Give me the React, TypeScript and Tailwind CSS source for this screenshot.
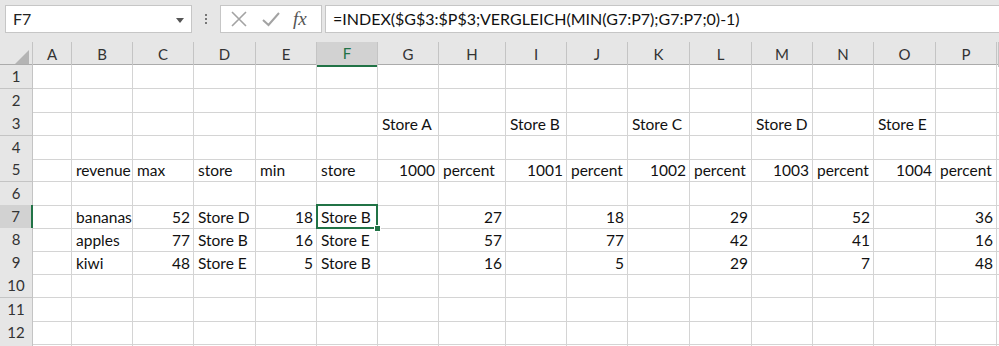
import React from "react";

const COLS = ["A", "B", "C", "D", "E", "F", "G", "H", "I", "J", "K", "L", "M", "N", "O", "P", ""];
const GRID = "grid grid-cols-[33px_39px_61px_61px_62px_61px_61px_61px_67px_61px_61px_62px_62px_61px_61px_62px_61px_1fr]";
const HEIGHTS = ["h-[24px]", "h-[23px]", "h-[24px]", "h-[22px]", "h-[24px]", "h-[23px]", "h-[23px]", "h-[23px]", "h-[23px]", "h-[24px]", "h-[23px]", "h-[23px]", "h-[23px]"];

type Cell = { v: string; r?: boolean };
type Row = Record<string, Cell>;

const t = (v: string): Cell => ({ v });
const n = (v: string): Cell => ({ v, r: true });

const DATA: Record<number, Row> = {
  3: { G: t("Store A"), I: t("Store B"), K: t("Store C"), M: t("Store D"), O: t("Store E") },
  5: {
    B: t("revenue"), C: t("max"), D: t("store"), E: t("min"), F: t("store"),
    G: n("1000"), H: t("percent"), I: n("1001"), J: t("percent"), K: n("1002"), L: t("percent"),
    M: n("1003"), N: t("percent"), O: n("1004"), P: t("percent"),
  },
  7: { B: t("bananas"), C: n("52"), D: t("Store D"), E: n("18"), F: t("Store B"), H: n("27"), J: n("18"), L: n("29"), N: n("52"), P: n("36") },
  8: { B: t("apples"), C: n("77"), D: t("Store B"), E: n("16"), F: t("Store E"), H: n("57"), J: n("77"), L: n("42"), N: n("41"), P: n("16") },
  9: { B: t("kiwi"), C: n("48"), D: t("Store E"), E: n("5"), F: t("Store B"), H: n("16"), J: n("5"), L: n("29"), N: n("7"), P: n("48") },
};

function FormulaBar() {
  return (
    <div className="flex h-[42px] items-start bg-[#e6e6e6] pt-[5px] font-['Lato',sans-serif]">
      <div className="ml-[5px] flex h-[28px] w-[187px] items-center justify-between border border-[#c6c6c6] bg-white pl-[7px] pr-[7px] text-[16px] text-[#222]">
        <span>F7</span>
        <svg width="8" height="5" viewBox="0 0 8 5" className="mt-[2px]">
          <path d="M0 0h8L4 5z" fill="#555" />
        </svg>
      </div>
      <div className="flex h-[28px] w-[28px] flex-col items-center justify-center gap-[2px]">
        <span className="h-[2px] w-[2px] bg-[#777]" />
        <span className="h-[2px] w-[2px] bg-[#777]" />
        <span className="h-[2px] w-[2px] bg-[#777]" />
      </div>
      <div className="flex h-[28px] w-[102px] items-center border border-[#c6c6c6] bg-white">
        <svg width="20" height="20" viewBox="0 0 20 20" className="ml-[8px]">
          <path d="M3 3L17 17M17 3L3 17" stroke="#a3a3a3" strokeWidth="1.6" fill="none" />
        </svg>
        <svg width="20" height="20" viewBox="0 0 20 20" className="ml-[12px]">
          <path d="M2 11L7.5 16L18 4" stroke="#a3a3a3" strokeWidth="2" fill="none" />
        </svg>
        <span className="ml-[12px] font-['Liberation_Serif',serif] text-[19px] italic text-[#555]">fx</span>
      </div>
      <div className="ml-[3px] flex h-[28px] flex-1 items-center border border-r-0 border-[#c6c6c6] bg-white pl-[7px] text-[16px] text-[#111]">
        =INDEX($G$3:$P$3;VERGLEICH(MIN(G7:P7);G7:P7;0)-1)
      </div>
    </div>
  );
}

function HeaderRow() {
  return (
    <div className={`${GRID} h-[23px] border-b border-[#ababab] bg-[#e6e6e6] font-['Lato',sans-serif] text-[15px] text-[#333]`}>
      <div className="relative border-r border-[#c4c4c4]">
        <svg width="14" height="14" viewBox="0 0 14 14" className="absolute bottom-[3px] right-[3px]">
          <path d="M14 0V14H0z" fill="#b4b4b4" />
        </svg>
      </div>
      {COLS.map((c) =>
        c === "F" ? (
          <div key={c} className="flex items-center justify-center border-r border-b-2 border-r-[#c4c4c4] border-b-[#217346] bg-[#d2d2d2] text-[#217346]">
            {c}
          </div>
        ) : (
          <div key={c || "x"} className="flex items-center justify-center border-r border-[#c4c4c4]">
            {c}
          </div>
        )
      )}
    </div>
  );
}

function SheetRow({ idx }: { idx: number }) {
  const row = DATA[idx] || {};
  const h = HEIGHTS[idx - 1];
  const active = idx === 7;
  return (
    <div className={`${GRID} ${h} font-['Lato',sans-serif] text-[15.5px] text-[#111]`}>
      <div
        className={
          active
            ? "flex items-center justify-center border-b border-r-2 border-b-[#c4c4c4] border-r-[#217346] bg-[#d2d2d2] text-[15px] text-[#333]"
            : "flex items-center justify-center border-b border-r border-[#c4c4c4] bg-[#e6e6e6] text-[15px] text-[#333]"
        }
      >
        {idx < 13 ? idx : ""}
      </div>
      {COLS.map((c) => {
        const cell = row[c];
        const sel = active && c === "F";
        return (
          <div
            key={c || "x"}
            className={`relative flex items-end whitespace-nowrap border-b border-r border-[#d4d4d4] pb-[1px] leading-[20px] ${
              cell?.r ? "justify-end pr-[3px]" : "justify-start pl-[4px]"
            } ${sel ? "z-10 overflow-visible" : "overflow-hidden"}`}
          >
            {cell?.v}
            {sel && (
              <>
                <div className="pointer-events-none absolute -left-[1px] -top-[1px] bottom-[-1px] right-[-1px] border-2 border-[#217346]" />
                <div className="absolute bottom-[-4px] right-[-4px] h-[7px] w-[7px] border border-white bg-[#217346]" />
              </>
            )}
          </div>
        );
      })}
    </div>
  );
}

export default function App() {
  return (
    <div className="h-[346px] w-[999px] overflow-hidden bg-white">
      <FormulaBar />
      <HeaderRow />
      {Array.from({ length: 13 }, (_, i) => (
        <SheetRow key={i} idx={i + 1} />
      ))}
    </div>
  );
}
